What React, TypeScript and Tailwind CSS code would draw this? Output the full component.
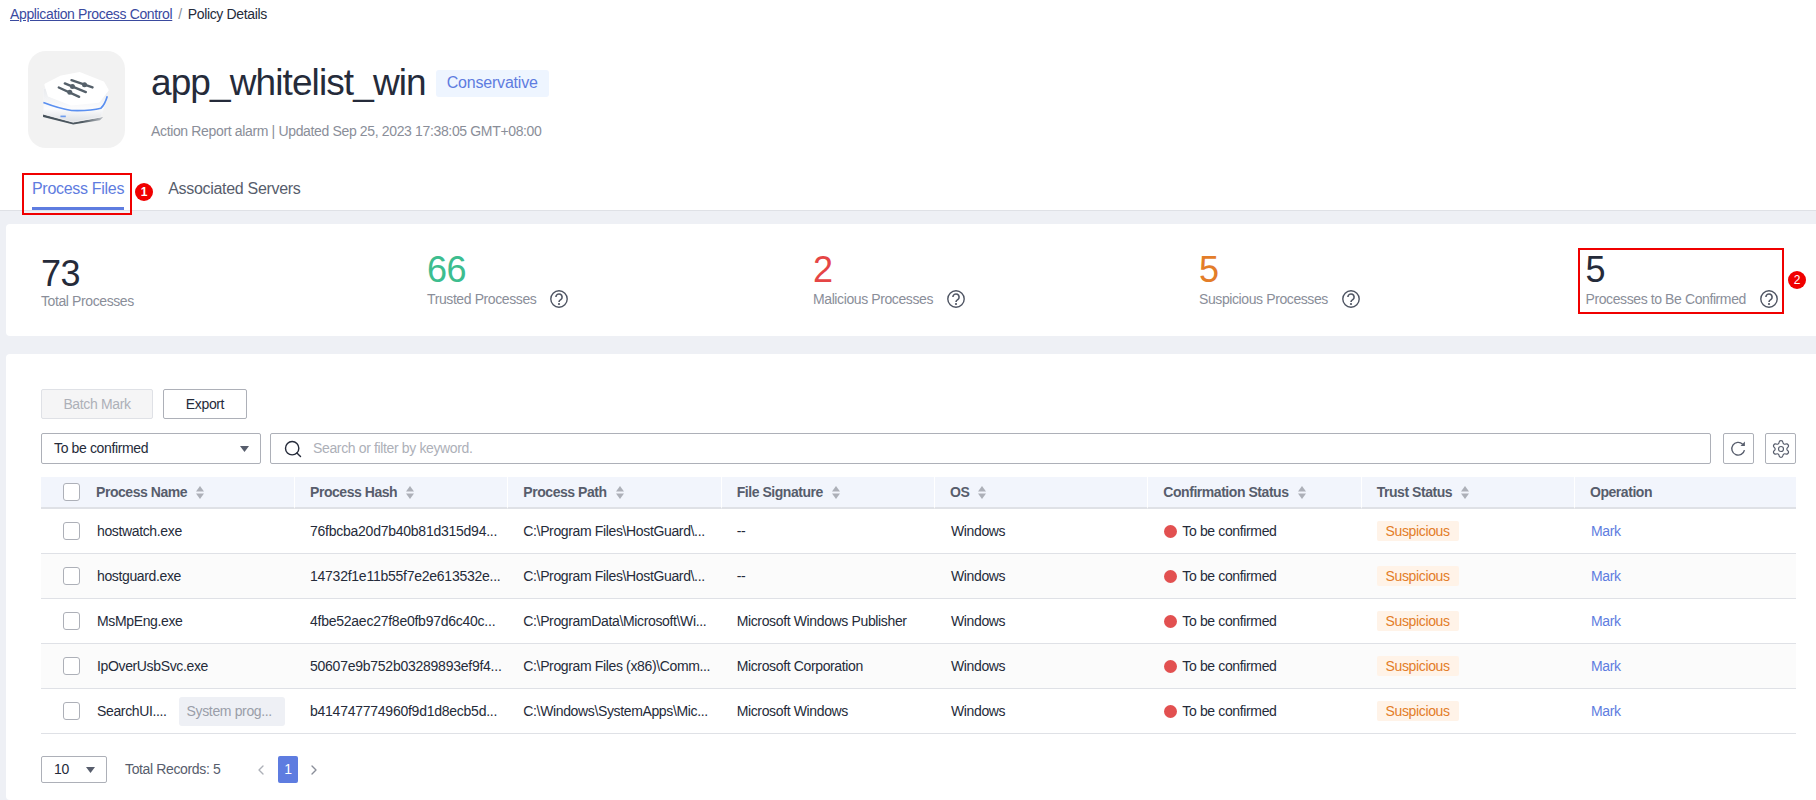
import { Search, ChevronLeft, ChevronRight, Settings } from "lucide-react";

const rows = [
  { name: "hostwatch.exe", hash: "76fbcba20d7b40b81d315d94...", path: "C:\\Program Files\\HostGuard\\...", sign: "--" },
  { name: "hostguard.exe", hash: "14732f1e11b55f7e2e613532e...", path: "C:\\Program Files\\HostGuard\\...", sign: "--" },
  { name: "MsMpEng.exe", hash: "4fbe52aec27f8e0fb97d6c40c...", path: "C:\\ProgramData\\Microsoft\\Wi...", sign: "Microsoft Windows Publisher" },
  { name: "IpOverUsbSvc.exe", hash: "50607e9b752b03289893ef9f4...", path: "C:\\Program Files (x86)\\Comm...", sign: "Microsoft Corporation" },
  { name: "SearchUI....", hash: "b414747774960f9d1d8ecb5d...", path: "C:\\Windows\\SystemApps\\Mic...", sign: "Microsoft Windows", tag: "System prog..." },
];

const columns = ["Process Hash", "Process Path", "File Signature", "OS", "Confirmation Status", "Trust Status"];

function HelpIcon() {
  return (
    <svg width="18" height="18" viewBox="0 0 18 18" fill="none" stroke="#4f5563" strokeWidth="1.4" className="shrink-0">
      <circle cx="9" cy="9" r="8.2" />
      <path d="M5.9 7.1a3.1 3.1 0 1 1 4.9 2.5c-1 .7-1.8 1.2-1.8 2.4" strokeWidth="1.6" />
      <circle cx="9" cy="14" r="1.1" fill="#4f5563" stroke="none" />
    </svg>
  );
}

function SortIcon() {
  return (
    <svg width="8" height="13" viewBox="0 0 8 13" fill="#adb0b8" className="shrink-0">
      <path d="M4 0 8 5.5H0Z" />
      <path d="M4 13 0 7.5H8Z" />
    </svg>
  );
}

function Caret() {
  return (
    <svg width="9" height="6" viewBox="0 0 9 6" fill="#575d6c">
      <path d="M0 0H9L4.5 6Z" />
    </svg>
  );
}

function Checkbox() {
  return <span className="block w-[17px] h-[18px] border border-[#adb0b8] rounded-[3px] bg-white" />;
}

function Logo() {
  return (
    <svg width="97" height="97" viewBox="25 33 290 290">
      <defs>
        <linearGradient id="side" x1="0" y1="0" x2="0" y2="1">
          <stop offset="0" stopColor="#e9ebee" />
          <stop offset="0.6" stopColor="#fcfcfd" />
          <stop offset="1" stopColor="#dcdfe3" />
        </linearGradient>
        <linearGradient id="base" x1="0" y1="0" x2="1" y2="0">
          <stop offset="0" stopColor="#46515a" />
          <stop offset="0.65" stopColor="#4f5a62" />
          <stop offset="1" stopColor="#b8bcc2" />
        </linearGradient>
        <filter id="soft">
          <feGaussianBlur stdDeviation="1.4" />
        </filter>
      </defs>
      <path d="M70 222 70 230 160 253 240 240 250 230 160 246Z" fill="url(#base)" filter="url(#soft)" />
      <path d="M71 145 71 222 160 246 243 230 262 176 264 145Z" fill="url(#side)" stroke="#f4f5f6" strokeWidth="2" strokeLinejoin="round" />
      <path d="M78 134 125 110 180 100 250 128 262 150 236 184 155 192 88 166Z" fill="#ffffff" stroke="#ffffff" strokeWidth="8" strokeLinejoin="round" />
      <path d="M71 187C100 198 130 207 155 211 190 212 225 209 243 204 252 195 258 182 262 168" fill="none" stroke="#5a8ff0" strokeWidth="5" filter="url(#soft)" />
      <rect x="122" y="226" width="16" height="5" fill="#6d9cf0" />
      <g stroke="#55616a" strokeWidth="7" strokeLinecap="round" filter="url(#soft)">
        <path d="M155 120 218 142" />
        <path d="M135 130 198 156" />
        <path d="M117 142 178 170" />
        <circle cx="194" cy="134" r="4" fill="#55616a" />
        <circle cx="158" cy="139" r="4" fill="#55616a" />
        <circle cx="150" cy="156" r="4" fill="#55616a" />
      </g>
    </svg>
  );
}

function Stat({ value, label, color, help }: { value: string; label: string; color: string; help?: boolean }) {
  return (
    <div className={help ? "pt-[26px]" : "pt-[33px]"}>
      <div className={help ? `text-[36px] tracking-[-0.5px] leading-[39px] ${color}` : `text-[36px] tracking-[-0.5px] leading-[34px] ${color}`}>{value}</div>
      <div className="flex items-center h-[20px] text-[14px] tracking-[-0.4px] text-[#8a8e99]">
        <span>{label}</span>
        {help && <span className="ml-[14px]"><HelpIcon /></span>}
      </div>
    </div>
  );
}

export default function App() {
  return (
    <div className="relative w-[1816px] h-[800px] overflow-hidden flex flex-col bg-[#eef0f5] font-['Liberation_Sans',Arial,sans-serif] text-[#252b3a]">
      {/* Header */}
      <div className="h-[211px] bg-white border-b border-[#dfe1e6] shrink-0">
        <div className="h-[29px] pl-[10px] flex items-center text-[14px] tracking-[-0.36px]">
          <a className="text-[#3a4a9f] underline">Application Process Control</a>
          <span className="mx-[6px] text-[#8a8e99]">/</span>
          <span>Policy Details</span>
        </div>
        <div className="flex mt-[22px] ml-[28px] h-[97px]">
          <div className="w-[97px] h-[97px] rounded-[18px] bg-[#f2f2f2] overflow-hidden">
            <Logo />
          </div>
          <div className="ml-[26px]">
            <div className="flex items-center h-[46px] mt-[9px]">
              <h1 className="text-[37px] tracking-[-0.9px] leading-[46px] font-normal">app_whitelist_win</h1>
              <span className="ml-[10px] h-[27px] px-[11px] flex items-center rounded-[3px] bg-[#eef5ff] text-[16px] tracking-[-0.2px] text-[#5e7ce0]">Conservative</span>
            </div>
            <div className="mt-[15px] text-[14px] tracking-[-0.35px] leading-[20px] text-[#8a8e99]">Action Report alarm | Updated Sep 25, 2023 17:38:05 GMT+08:00</div>
          </div>
        </div>
        <div className="flex h-[62px] text-[16px] tracking-[-0.3px] pl-[32px]">
          <div className="h-[62px] pt-[31px] leading-[20px] border-b-[3px] border-[#5e7ce0] text-[#5e7ce0]">Process Files</div>
          <div className="ml-[44px] pt-[31px] leading-[20px] text-[#575d6c]">Associated Servers</div>
        </div>
      </div>

      {/* Stats */}
      <div className="ml-[6px] mt-[13px] h-[112px] shrink-0 bg-white rounded-l-[4px] grid grid-cols-[386px_386px_386px_386.5px_1fr] pl-[35px]">
        <Stat value="73" label="Total Processes" color="text-[#252b3a]" />
        <Stat value="66" label="Trusted Processes" color="text-[#3dbd8f]" help />
        <Stat value="2" label="Malicious Processes" color="text-[#e54545]" help />
        <Stat value="5" label="Suspicious Processes" color="text-[#e37d29]" help />
        <Stat value="5" label="Processes to Be Confirmed" color="text-[#252b3a]" help />
      </div>

      {/* Table card */}
      <div className="ml-[6px] mt-[18px] flex-1 bg-white rounded-l-[4px] pl-[35px] pr-[20px] pt-[35px] text-[14px] tracking-[-0.36px]">
        <div className="flex gap-[10px]">
          <button className="w-[112px] h-[30px] rounded-[2px] border border-[#dfe1e6] bg-[#f5f5f6] text-[#adb0b8]">Batch Mark</button>
          <button className="w-[84px] h-[30px] rounded-[2px] border border-[#adb0b8] bg-white">Export</button>
        </div>
        <div className="flex mt-[14px] h-[31px]">
          <div className="w-[220px] flex items-center justify-between pl-[12px] pr-[11px] border border-[#adb0b8] rounded-[2px]">
            <span>To be confirmed</span>
            <Caret />
          </div>
          <div className="ml-[9px] flex-1 flex items-center pl-[12px] border border-[#adb0b8] rounded-[2px] text-[#adb0b8]">
            <Search size={20} strokeWidth={1.7} className="text-[#252b3a]" />
            <span className="ml-[10px]">Search or filter by keyword.</span>
          </div>
          <button className="ml-[12px] w-[31px] flex items-center justify-center border border-[#adb0b8] rounded-[2px]">
            <svg width="17" height="17" viewBox="0 0 16 16" fill="none" stroke="#575d6c" strokeWidth="1.3">
              <path d="M13.6 9.5a6 6 0 1 1-1.7-5.6" />
              <path d="M14 1.5v4.2H9.9Z" fill="#575d6c" stroke="none" />
            </svg>
          </button>
          <button className="ml-[11px] w-[31px] flex items-center justify-center border border-[#adb0b8] rounded-[2px]">
            <Settings size={20} strokeWidth={1.4} className="text-[#575d6c]" />
          </button>
        </div>

        <table className="mt-[13px] w-[1755px] table-fixed border-separate border-spacing-0">
          <colgroup>
            <col className="w-[254px]" />
            <col className="w-[213.33px]" />
            <col className="w-[213.33px]" />
            <col className="w-[213.33px]" />
            <col className="w-[213.33px]" />
            <col className="w-[213.33px]" />
            <col className="w-[213.33px]" />
            <col />
          </colgroup>
          <thead>
            <tr className="text-[#575d6c]">
              <th className="h-[32px] p-0 bg-[#f2f5fc] border-b-2 border-[#dfe1e6] border-r border-r-white font-bold text-left tracking-[-0.45px]">
                <div className="flex items-center pl-[22px]">
                  <Checkbox />
                  <span className="ml-[16px]">Process Name</span>
                  <span className="ml-[9px]"><SortIcon /></span>
                </div>
              </th>
              {columns.map((c) => (
                <th key={c} className="h-[32px] p-0 bg-[#f2f5fc] border-b-2 border-[#dfe1e6] border-r border-r-white font-bold text-left tracking-[-0.45px]">
                  <div className="flex items-center pl-[15px]">
                    <span>{c}</span>
                    <span className="ml-[9px]"><SortIcon /></span>
                  </div>
                </th>
              ))}
              <th className="h-[32px] p-0 pl-[15px] bg-[#f2f5fc] border-b-2 border-[#dfe1e6] font-bold text-left tracking-[-0.45px]">Operation</th>
            </tr>
          </thead>
          <tbody>
            {rows.map((r, i) => (
              <tr key={r.name} className={i % 2 === 1 ? "bg-[#fbfbfb]" : "bg-white"}>
                <td className="h-[45px] p-0 border-b border-[#dfe1e6]">
                  <div className="flex items-center pl-[22px]">
                    <Checkbox />
                    <span className="ml-[17px]">{r.name}</span>
                    {r.tag && <span className="ml-[12px] w-[106px] h-[29px] pl-[8px] flex items-center rounded-[3px] bg-[#eef0f5] text-[#9a9ea9]">{r.tag}</span>}
                  </div>
                </td>
                <td className="p-0 pl-[15px] border-b border-[#dfe1e6] whitespace-nowrap overflow-hidden tracking-[-0.25px]">{r.hash}</td>
                <td className="p-0 pl-[15px] border-b border-[#dfe1e6] whitespace-nowrap overflow-hidden">{r.path}</td>
                <td className="p-0 pl-[15px] border-b border-[#dfe1e6]">{r.sign}</td>
                <td className="p-0 pl-[16px] border-b border-[#dfe1e6]">Windows</td>
                <td className="p-0 pl-[16px] border-b border-[#dfe1e6]">
                  <div className="flex items-center">
                    <span className="w-[13px] h-[13px] rounded-full bg-[#e25050]" />
                    <span className="ml-[5px]">To be confirmed</span>
                  </div>
                </td>
                <td className="p-0 pl-[15px] border-b border-[#dfe1e6]">
                  <span className="inline-flex items-center justify-center w-[82px] h-[20px] rounded-[2px] bg-[#fff3e8] text-[#e37d29]">Suspicious</span>
                </td>
                <td className="p-0 pl-[16px] border-b border-[#dfe1e6] text-[#5e7ce0]">Mark</td>
              </tr>
            ))}
          </tbody>
        </table>

        <div className="flex items-center mt-[22px] h-[27px]">
          <div className="w-[66px] h-[27px] flex items-center justify-between pl-[12px] pr-[11px] border border-[#adb0b8] rounded-[2px]">
            <span>10</span>
            <Caret />
          </div>
          <span className="ml-[18px] w-[128px] text-[#575d6c]">Total Records: 5</span>
          <ChevronLeft size={16} className="text-[#adb0b8]" />
          <span className="ml-[9px] w-[20px] h-[27px] flex items-center justify-center rounded-[2px] bg-[#5e7ce0] text-white">1</span>
          <ChevronRight size={16} className="ml-[8px] text-[#8a8e99]" />
        </div>
      </div>

      {/* Screenshot annotations */}
      <div className="absolute left-[22px] top-[173px] w-[110px] h-[42px] border-2 border-[#f00000]" />
      <span className="absolute left-[135px] top-[183px] w-[18px] h-[18px] rounded-full bg-[#f00000] text-white text-[12px] font-bold flex items-center justify-center">1</span>
      <div className="absolute left-[1578px] top-[248px] w-[206px] h-[66px] border-2 border-[#f00000]" />
      <span className="absolute left-[1788px] top-[271px] w-[18px] h-[18px] rounded-full bg-[#f00000] text-white text-[12px] flex items-center justify-center">2</span>
    </div>
  );
}
